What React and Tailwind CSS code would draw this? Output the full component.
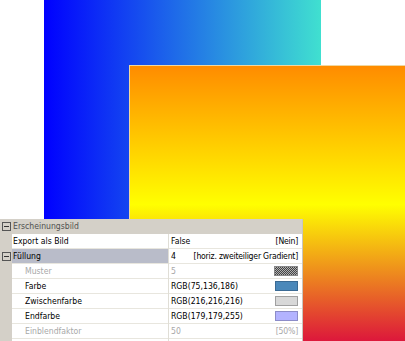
import React from 'react';

function Expander() {
    return (
        <div className="w-[9px] h-[9px] border border-[#555] flex items-center justify-center">
            <div className="w-[5px] h-px bg-[#333]" />
        </div>
    );
}

function Row({ label, value, right, swatch, muted, sub, selected, expander }) {
    const tone = muted ? 'text-[#a8a8a8]' : 'text-black';
    return (
        <div className="flex h-[15px]">
            <div className="w-[12px] bg-[#d4d0c8] flex items-center pl-[2px]">
                {expander && <Expander />}
            </div>
            <div className={`w-[156px] flex items-center border-b border-[#e8e6de] ${sub ? 'pl-[13px]' : 'pl-[1px]'} ${selected ? 'bg-[#b9bcc9]' : 'bg-white'} ${tone}`}>
                {label}
            </div>
            <div className="w-px bg-[#e0ded6]" />
            <div className={`flex-1 flex items-center justify-between bg-white border-b border-[#e8e6de] pl-[2px] pr-[4px] ${tone}`}>
                <span>{value}</span>
                {right && <span className="tracking-[-0.2px]">{right}</span>}
                {swatch}
            </div>
        </div>
    );
}

export default function App() {
    return (
        <div className="relative w-[405px] h-[341px] overflow-hidden bg-white font-['DejaVu_Sans_Condensed','DejaVu_Sans',sans-serif] text-[8.6px] leading-none">
            {/* canvas shapes */}
            <div className="absolute left-[44px] top-0 w-[277px] h-[300px] bg-[linear-gradient(to_right,#0000ff,#40e0d0)]" />
            <div className="absolute left-[129px] top-[65px] w-[290px] h-[278px] bg-[linear-gradient(to_bottom,#ff8c00,#ffff00_50%,#dc143c)] border-t border-l border-[#f0d8a0]" />

            {/* property grid */}
            <div className="absolute left-0 top-[219px] w-[303px] border-r border-[#c8c6be]">
                <div className="flex items-center h-[15px] bg-[#d4d0c8] pl-[2px] text-[#505050]">
                    <Expander />
                    <span className="ml-[2px]">Erscheinungsbild</span>
                </div>
                <Row label="Export als Bild" value="False" right="[Nein]" />
                <Row label="Füllung" value="4" right="[horiz. zweiteiliger Gradient]" selected expander />
                <Row label="Muster" value="5" muted sub
                    swatch={<div className="w-[24px] h-[10px] border border-[#888] bg-[repeating-conic-gradient(#444_0%_25%,#b0b0b0_0%_50%)] bg-[length:2px_2px]" />} />
                <Row label="Farbe" value="RGB(75,136,186)" sub
                    swatch={<div className="w-[23px] h-[10px] border border-[#3a6a94] bg-[#4b88ba]" />} />
                <Row label="Zwischenfarbe" value="RGB(216,216,216)" sub
                    swatch={<div className="w-[23px] h-[10px] border border-[#a0a0a0] bg-[#d8d8d8]" />} />
                <Row label="Endfarbe" value="RGB(179,179,255)" sub
                    swatch={<div className="w-[23px] h-[10px] border border-[#8c8cc8] bg-[#b3b3ff]" />} />
                <Row label="Einblendfaktor" value="50" right="[50%]" muted sub />
                <Row label="" value="" />
            </div>
        </div>
    );
}
